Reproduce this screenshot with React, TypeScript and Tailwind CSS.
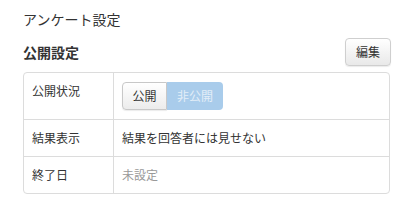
import React from 'react';

const font = { fontFamily: '"Noto Sans CJK JP", "Noto Sans", sans-serif' };

const rows = [
  { label: '公開状況', kind: 'toggle' },
  { label: '結果表示', kind: 'text', value: '結果を回答者には見せない' },
  { label: '終了日', kind: 'muted', value: '未設定' },
];

const Toggle: React.FC = () => (
  <div className="flex h-[28px] text-[12px]">
    <button className="w-[45px] h-full rounded-l-[4px] border border-[#c8c8c8] bg-gradient-to-b from-white to-[#ececec] text-[#333] shadow-[0_1px_1px_rgba(0,0,0,0.08)]">
      公開
    </button>
    <button className="w-[56px] h-full rounded-r-[4px] bg-[#a9cceb] text-[#e3eef8]">
      非公開
    </button>
  </div>
);

export default function App() {
  return (
    <div className="w-[404px] h-[204px] bg-white pl-[23px] pr-[14px] pt-[10px]" style={font}>
      <h1 className="text-[14px] leading-[18px] text-[#333]">アンケート設定</h1>

      <div className="flex items-center justify-between mt-[9px] h-[29px]">
        <h2 className="text-[14px] font-bold leading-[18px] text-[#333]">公開設定</h2>
        <button className="h-[28px] w-[46px] mr-[-1px] rounded-[4px] border border-[#cfcfcf] bg-gradient-to-b from-white to-[#e9e9e9] text-[12px] text-[#333] shadow-[0_1px_1px_rgba(0,0,0,0.08)]">
          編集
        </button>
      </div>

      <div className="mt-[6px] border border-[#dcdcdc] rounded-[4px] text-[12px] leading-[20px] text-[#333]">
        {rows.map((r, i) => (
          <div
            key={r.label}
            className={`flex ${i === 0 ? 'h-[46px]' : 'h-[37px] border-t border-[#dcdcdc]'}`}
          >
            <div className="w-[90px] shrink-0 border-r border-[#dcdcdc] pl-[8px] pt-[8px]">{r.label}</div>
            <div className={`flex-1 pl-[8px] ${r.kind === 'toggle' ? 'pt-[9px]' : 'pt-[8px]'}`}>
              {r.kind === 'toggle' && <Toggle />}
              {r.kind === 'text' && <span>{r.value}</span>}
              {r.kind === 'muted' && <span className="text-[#999]">{r.value}</span>}
            </div>
          </div>
        ))}
      </div>
    </div>
  );
}
